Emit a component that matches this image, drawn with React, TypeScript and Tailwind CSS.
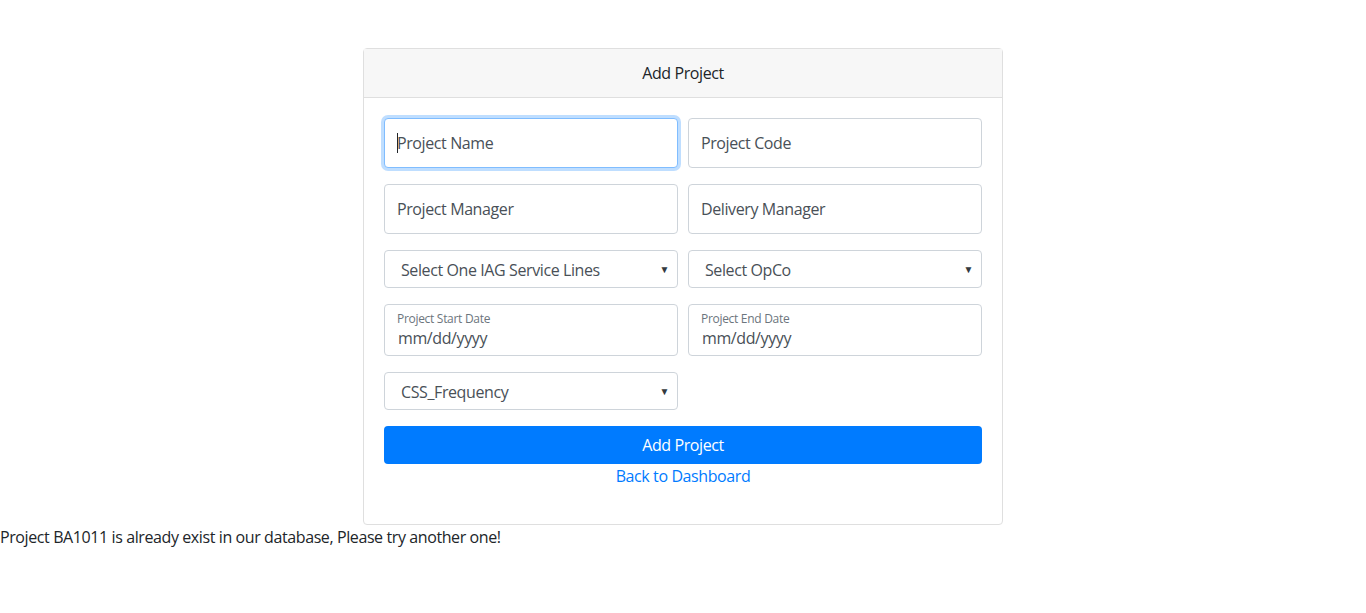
import React from "react";

const font = { fontFamily: '"Open Sans", "Noto Sans", Arial, sans-serif' };

function TextBox({ ph, focus }: { ph: string; focus?: boolean }) {
  return (
    <div className="relative">
      <input
        placeholder={ph}
        className={
          "h-[50px] w-full rounded-[4px] border bg-white px-[12px] text-[16px] tracking-[-0.4px] text-[#495057] outline-none placeholder:text-[#495057] " +
          (focus
            ? "border-[#80bdff] shadow-[0_0_0_3px_rgba(0,123,255,0.25)]"
            : "border-[#ced4da]")
        }
      />
      {focus && (
        <span className="pointer-events-none absolute left-[13px] top-[15px] h-[20px] w-[1px] bg-[#212529]" />
      )}
    </div>
  );
}

function SelectBox({ label }: { label: string }) {
  return (
    <div className="flex h-[38px] w-full items-center justify-between rounded-[4px] border border-[#ced4da] bg-white pl-[16px] pr-[8px] text-[16px] tracking-[-0.4px] text-[#495057]">
      <span className="pt-[1px]">{label}</span>
      <span className="text-[10px] text-[#343a40]">▼</span>
    </div>
  );
}

function DateBox({ label }: { label: string }) {
  return (
    <div className="flex h-[52px] w-full flex-col rounded-[4px] border border-[#ced4da] bg-white px-[12px] pt-[7px]">
      <span className="text-[12px] leading-[14px] tracking-[-0.3px] text-[#6c757d]">{label}</span>
      <span className="mt-[1px] pl-[1px] text-[16px] leading-[22px] tracking-[-0.4px] text-[#495057]">mm/dd/yyyy</span>
    </div>
  );
}

export default function App() {
  return (
    <div className="min-h-[613px] w-full bg-white text-[#212529] tracking-[-0.4px]" style={font}>
      <div className="flex justify-center pt-[48px]">
        <div className="w-[640px] rounded-[4px] border border-[#dfdfdf] bg-white">
          <div className="flex h-[49px] items-center justify-center border-b border-[#dfdfdf] bg-[#f7f7f7] text-[16px]">
            Add Project
          </div>
          <div className="flex flex-col px-[20px] pb-[36px] pt-[20px]">
            <div className="grid grid-cols-2 gap-[10px]">
              <TextBox ph="Project Name" focus />
              <TextBox ph="Project Code" />
            </div>
            <div className="mt-[16px] grid grid-cols-2 gap-[10px]">
              <TextBox ph="Project Manager" />
              <TextBox ph="Delivery Manager" />
            </div>
            <div className="mt-[16px] grid grid-cols-2 gap-[10px]">
              <SelectBox label="Select One IAG Service Lines" />
              <SelectBox label="Select OpCo" />
            </div>
            <div className="mt-[16px] grid grid-cols-2 gap-[10px]">
              <DateBox label="Project Start Date" />
              <DateBox label="Project End Date" />
            </div>
            <div className="mt-[16px] grid grid-cols-2 gap-[10px]">
              <SelectBox label="CSS_Frequency" />
            </div>
            <button className="mt-[16px] h-[38px] w-full rounded-[4px] bg-[#007bff] text-[16px] tracking-[-0.4px] text-white">
              Add Project
            </button>
            <div className="text-center text-[16px] leading-[24px] text-[#007bff]">
              Back to Dashboard
            </div>
          </div>
        </div>
      </div>
      <div className="text-[16px] leading-[24px]">
        Project BA1011 is already exist in our database, Please try another one!
      </div>
    </div>
  );
}
